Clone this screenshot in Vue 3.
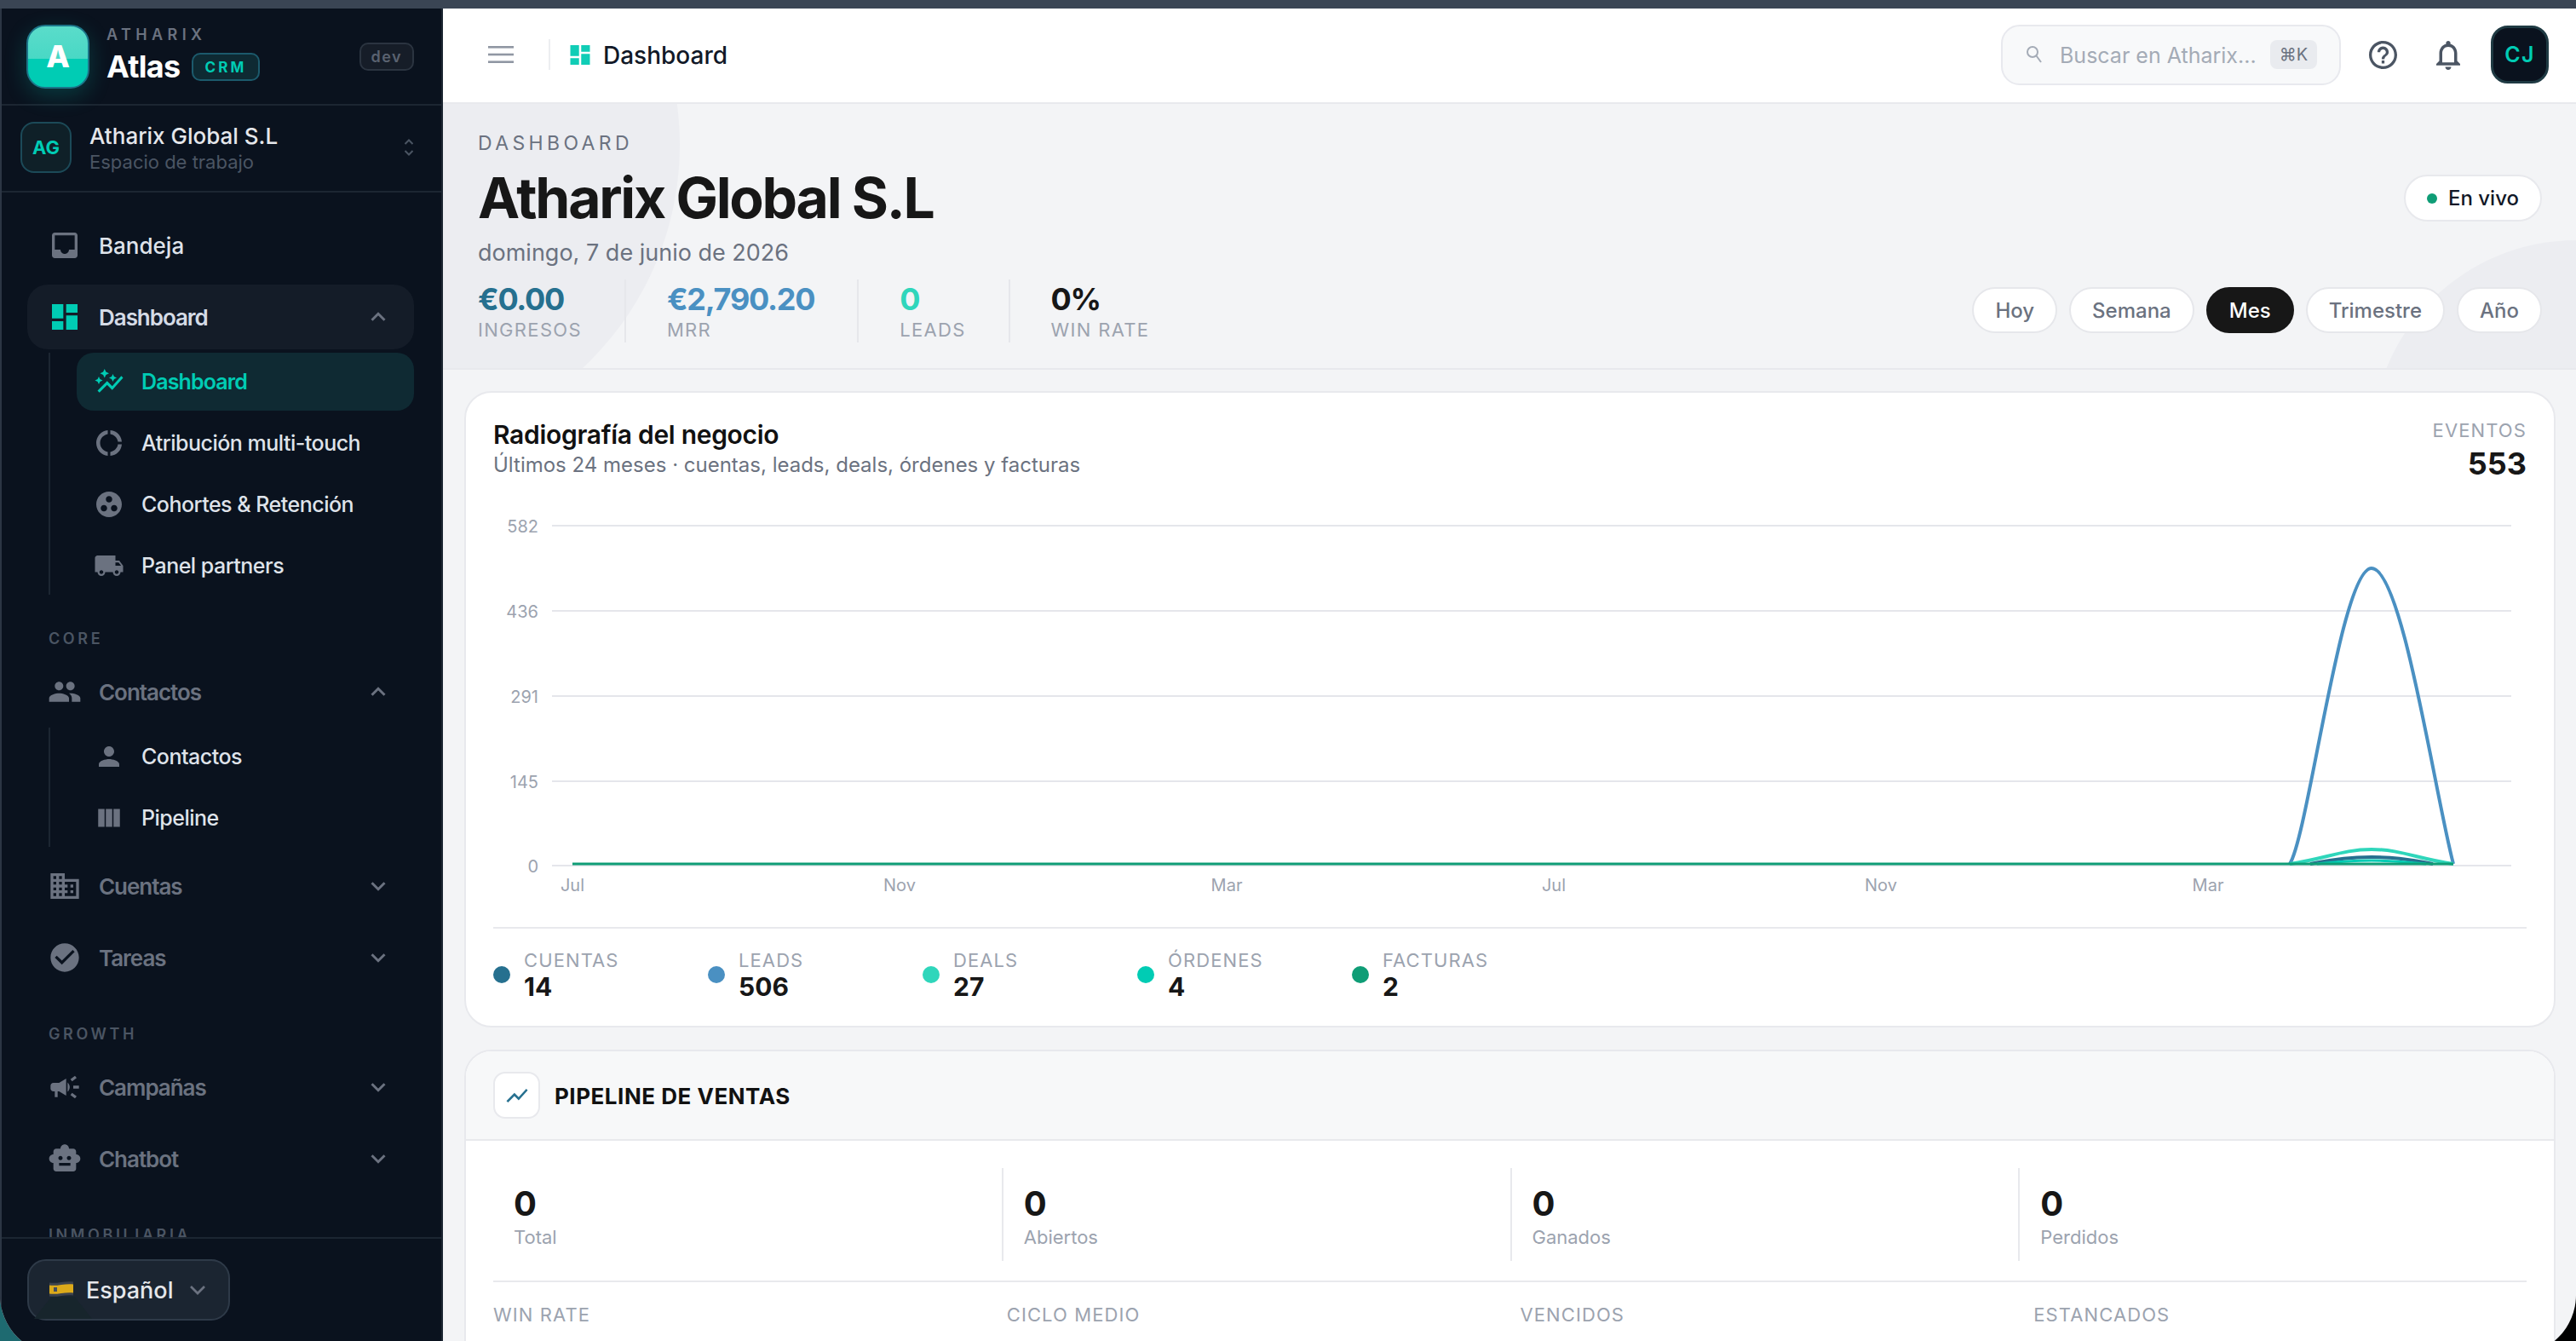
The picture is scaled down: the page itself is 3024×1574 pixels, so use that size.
<template>
  <div class="page">
    <div class="shell">
      <aside class="sidebar">
        <div class="brand">
          <div class="logo"><span>A</span></div>
          <div class="brand-text">
            <div class="brand-top">ATHARIX</div>
            <div class="brand-row">
              <span class="brand-name">Atlas</span>
              <span class="crm">CRM</span>
            </div>
          </div>
          <span class="dev">dev</span>
        </div>

        <div class="workspace">
          <div class="ws-avatar">AG</div>
          <div class="ws-text">
            <div class="ws-name">Atharix Global S.L</div>
            <div class="ws-sub">Espacio de trabajo</div>
          </div>
          <svg class="ws-arrows" viewBox="0 0 12 24" fill="none" stroke="currentColor" stroke-width="2">
            <path d="M1.5 8 6 3.5 10.5 8" />
            <path d="M1.5 16 6 20.5 10.5 16" />
          </svg>
        </div>

        <nav class="nav">
          <template v-for="sec in sections" :key="sec.label">
            <div v-if="sec.label" class="nav-label">{{ sec.label }}</div>
            <div class="nav-list">
              <div v-for="item in sec.items" :key="item.name" class="nav-block">
                <div class="nav-item" :class="{ open: item.active, plain: item.plain }">
                  <svg class="nav-icon" :class="{ teal: item.active }" viewBox="0 0 24 24" fill="currentColor"><path :d="icons[item.icon]" /></svg>
                  <span class="nav-name">{{ item.name }}</span>
                  <svg v-if="item.chevron" class="chev" viewBox="0 0 24 24" fill="none" stroke="currentColor" stroke-width="2">
                    <path :d="item.chevron === 'up' ? 'M7 14.5l5-5 5 5' : 'M7 9.5l5 5 5-5'" />
                  </svg>
                </div>
                <div v-if="item.children" class="sub-list">
                  <div v-for="sub in item.children" :key="sub.name" class="sub-item" :class="{ current: sub.current }">
                    <svg class="sub-icon" viewBox="0 0 24 24" fill="currentColor"><path :d="icons[sub.icon]" /></svg>
                    <span>{{ sub.name }}</span>
                  </div>
                </div>
              </div>
            </div>
          </template>
        </nav>

        <div class="side-foot">
          <button class="lang">
            <span class="lang-shade"></span>
            <svg class="flag" viewBox="0 0 28 18">
              <path d="M0 1.5C9 3 19 -1 28 .5V16.5C19 15 9 19 0 17.5Z" fill="#3c424c" />
              <path d="M0 4.5C9 6 19 2 28 3.5V13.5C19 12 9 16 0 14.5Z" fill="#dcaa1a" />
              <rect x="5" y="7" width="4" height="5" fill="#46505e" />
            </svg>
            <span class="lang-name">Español</span>
            <svg class="lang-chev" viewBox="0 0 24 24" fill="none" stroke="currentColor" stroke-width="2"><path d="M6 9l6 6 6-6" /></svg>
          </button>
        </div>
      </aside>

      <main class="main">
        <header class="topbar">
          <svg class="menu" viewBox="0 0 30 20" fill="#9097a3">
            <rect y="0" width="30" height="2.6" />
            <rect y="8.7" width="30" height="2.6" />
            <rect y="17.4" width="30" height="2.6" />
          </svg>
          <span class="top-sep"></span>
          <svg class="crumb-icon" viewBox="3 3 18 18" fill="#10cdb6"><path :d="icons.dashboard" /></svg>
          <span class="crumb">Dashboard</span>

          <div class="search">
            <svg class="search-icon" viewBox="0 0 20 24" fill="none" stroke="#a4abb6" stroke-width="2">
              <circle cx="8" cy="9" r="6" />
              <path d="M12.5 13.5 18 21" />
            </svg>
            <span class="search-text">Buscar en Atharix...</span>
            <kbd>⌘K</kbd>
          </div>
          <svg class="top-icon help" viewBox="2 2 20 20" fill="#4b5563"><path :d="icons.help" /></svg>
          <svg class="top-icon bell" viewBox="4 2 16 20" fill="#4b5563"><path :d="icons.bell" /></svg>
          <div class="avatar">CJ</div>
        </header>

        <section class="hero">
          <span class="blob blob-left"></span>
          <span class="blob blob-right"></span>
          <div class="hero-left">
            <div class="eyebrow">DASHBOARD</div>
            <h1>Atharix Global S.L</h1>
            <div class="date">domingo, 7 de junio de 2026</div>
            <div class="hero-stats">
              <div v-for="s in heroStats" :key="s.label" class="hero-stat">
                <div class="hero-value" :style="{ color: s.color }">{{ s.value }}</div>
                <div class="hero-label">{{ s.label }}</div>
              </div>
            </div>
          </div>
          <div class="hero-right">
            <div class="live"><i></i>En vivo</div>
            <div class="periods">
              <button v-for="p in periods" :key="p" class="period" :class="{ on: p === 'Mes' }">{{ p }}</button>
            </div>
          </div>
        </section>

        <div class="content">
          <section class="card xray">
            <div class="xray-head">
              <div>
                <h2>Radiografía del negocio</h2>
                <p>Últimos 24 meses · cuentas, leads, deals, órdenes y facturas</p>
              </div>
              <div class="events">
                <div class="events-label">EVENTOS</div>
                <div class="events-value">553</div>
              </div>
            </div>

            <svg class="chart" viewBox="579 600 2390 460" width="2390" height="460">
              <g v-for="t in yTicks" :key="t.label">
                <line x1="648" :y1="t.y" x2="2948" :y2="t.y" stroke="#e5e6eb" stroke-width="2" />
                <text x="632" :y="t.y + 8" text-anchor="end" class="tick">{{ t.label }}</text>
              </g>
              <text v-for="t in xTicks" :key="t.x" :x="t.x" y="1046" text-anchor="middle" class="tick">{{ t.label }}</text>
              <path d="M2688 1014C2710 980 2748 667 2784 667C2820 667 2858 930 2880 1014" fill="none" stroke="#4a90c2" stroke-width="4" />
              <path d="M2688 1014C2730 1008 2750 997 2784 997C2818 997 2838 1008 2880 1014" fill="none" stroke="#2fd6bb" stroke-width="4" />
              <path d="M2712 1014C2745 1008 2760 1006 2784 1006C2808 1006 2823 1008 2856 1014" fill="none" stroke="#26708f" stroke-width="4" />
              <path d="M2720 1014C2750 1011 2765 1010 2784 1010C2803 1010 2818 1011 2848 1014" fill="none" stroke="#00ccb4" stroke-width="3" />
              <path d="M672 1014H2880" fill="none" stroke="#0f9d76" stroke-width="3" />
            </svg>

            <div class="legend">
              <div v-for="l in legend" :key="l.label" class="legend-item">
                <i :style="{ background: l.color }"></i>
                <div>
                  <div class="legend-label">{{ l.label }}</div>
                  <div class="legend-value">{{ l.value }}</div>
                </div>
              </div>
            </div>
          </section>

          <section class="card pipeline">
            <div class="pipe-head">
              <span class="pipe-icon">
                <svg viewBox="0 0 24 24" fill="#26708f"><path :d="icons.showChart" /></svg>
              </span>
              <h3>PIPELINE DE VENTAS</h3>
            </div>
            <div class="pipe-body">
              <div class="pipe-stats">
                <div v-for="s in pipeStats" :key="s" class="pipe-stat">
                  <div class="pipe-value">0</div>
                  <div class="pipe-label">{{ s }}</div>
                </div>
              </div>
              <div class="pipe-metrics">
                <div v-for="m in pipeMetrics" :key="m.label" class="metric">
                  <div class="metric-label">{{ m.label }}</div>
                  <div class="metric-value" :style="{ color: m.color }">{{ m.value }}</div>
                </div>
              </div>
            </div>
          </section>
        </div>
      </main>
    </div>
  </div>
</template>

<script setup>
const icons = {
  inbox: 'M19 3H4.99c-1.11 0-1.98.89-1.98 2L3 19c0 1.1.88 2 1.99 2H19c1.1 0 2-.9 2-2V5c0-1.11-.9-2-2-2zm0 12h-4c0 1.66-1.35 3-3 3s-3-1.34-3-3H4.99V5H19v10z',
  dashboard: 'M3 13h8V3H3v10zm0 8h8v-6H3v6zm10 0h8V11h-8v10zm0-18v6h8V3h-8z',
  autoGraph: 'M14.06 9.94 12 9l2.06-.94L15 6l.94 2.06L18 9l-2.06.94L15 12zM4 14l.94-2.06L7 11l-2.06-.94L4 8l-.94 2.06L1 11l2.06.94L4 14zm4.5-5 1.09-2.41L12 5.5 9.59 4.41 8.5 2 7.41 4.41 5 5.5l2.41 1.09L8.5 9zm-4 11.5 6-6.01 4 4L23 8.93l-1.41-1.41-7.09 7.97-4-4L3 19l1.5 1.5z',
  donut: 'M11 5.08V2c-5 .5-9 4.81-9 10s4 9.5 9 10v-3.08c-3-.48-6-3.19-6-6.92s3-6.44 6-6.92zM18.97 11H22c-.47-5-4-8.53-9-9v3.08C16 5.51 18.54 8 18.97 11zM13 18.92V22c5-.47 8.53-4 9-9h-3.03c-.43 3-2.97 5.49-5.97 5.92z',
  groupWork: 'M12 2C6.48 2 2 6.48 2 12s4.48 10 10 10 10-4.48 10-10S17.52 2 12 2zM8 17.5c-1.38 0-2.5-1.12-2.5-2.5s1.12-2.5 2.5-2.5 2.5 1.12 2.5 2.5-1.12 2.5-2.5 2.5zM9.5 8c0-1.38 1.12-2.5 2.5-2.5s2.5 1.12 2.5 2.5-1.12 2.5-2.5 2.5S9.5 9.38 9.5 8zm6.5 9.5c-1.38 0-2.5-1.12-2.5-2.5s1.12-2.5 2.5-2.5 2.5 1.12 2.5 2.5-1.12 2.5-2.5 2.5z',
  truck: 'M20 8h-3V4H3c-1.1 0-2 .9-2 2v11h2c0 1.66 1.34 3 3 3s3-1.34 3-3h6c0 1.66 1.34 3 3 3s3-1.34 3-3h2v-5l-3-4zM6 18.5c-.83 0-1.5-.67-1.5-1.5s.67-1.5 1.5-1.5 1.5.67 1.5 1.5-.67 1.5-1.5 1.5zm13.5-9l1.96 2.5H17V9.5h2.5zm-1.5 9c-.83 0-1.5-.67-1.5-1.5s.67-1.5 1.5-1.5 1.5.67 1.5 1.5-.67 1.5-1.5 1.5z',
  people: 'M16 11c1.66 0 2.99-1.34 2.99-3S17.66 5 16 5c-1.66 0-3 1.34-3 3s1.34 3 3 3zm-8 0c1.66 0 2.99-1.34 2.99-3S9.66 5 8 5C6.34 5 5 6.34 5 8s1.34 3 3 3zm0 2c-2.33 0-7 1.17-7 3.5V19h14v-2.5c0-2.33-4.67-3.5-7-3.5zm8 0c-.29 0-.62.02-.97.05 1.16.84 1.97 1.97 1.97 3.45V19h6v-2.5c0-2.33-4.67-3.5-7-3.5z',
  person: 'M12 12c2.21 0 4-1.79 4-4s-1.79-4-4-4-4 1.79-4 4 1.79 4 4 4zm0 2c-2.67 0-8 1.34-8 4v2h16v-2c0-2.66-5.33-4-8-4z',
  week: 'M3.5 5h5v14h-5zM9.5 5h5v14h-5zM15.5 5h5v14h-5z',
  domain: 'M12 7V3H2v18h20V7H12zM6 19H4v-2h2v2zm0-4H4v-2h2v2zm0-4H4V9h2v2zm0-4H4V5h2v2zm4 12H8v-2h2v2zm0-4H8v-2h2v2zm0-4H8V9h2v2zm0-4H8V5h2v2zm10 12h-8v-2h2v-2h-2v-2h2v-2h-2V9h8v10zm-2-8h-2v2h2v-2zm0 4h-2v2h2v-2z',
  check: 'M12 2C6.48 2 2 6.48 2 12s4.48 10 10 10 10-4.48 10-10S17.52 2 12 2zm-2 15l-5-5 1.41-1.41L10 14.17l7.59-7.59L19 8l-9 9z',
  campaign: 'M18 11v2h4v-2h-4zm-2 6.61c.96.71 2.21 1.65 3.2 2.39.4-.53.8-1.07 1.2-1.6-.99-.74-2.24-1.68-3.2-2.4-.4.54-.8 1.08-1.2 1.61zM20.4 5.6c-.4-.53-.8-1.07-1.2-1.6-.99.74-2.24 1.68-3.2 2.4.4.53.8 1.07 1.2 1.6.96-.72 2.21-1.65 3.2-2.4zM4 9c-1.1 0-2 .9-2 2v2c0 1.1.9 2 2 2h1v4h2v-4h1l5 3V6L8 9H4zm11.5 3c0-1.33-.58-2.53-1.5-3.35v6.69c.92-.81 1.5-2.01 1.5-3.34z',
  bot: 'M20 9V7c0-1.1-.9-2-2-2h-3c0-1.66-1.34-3-3-3S9 3.34 9 5H6c-1.1 0-2 .9-2 2v2c-1.66 0-3 1.34-3 3s1.34 3 3 3v4c0 1.1.9 2 2 2h12c1.1 0 2-.9 2-2v-4c1.66 0 3-1.34 3-3s-1.34-3-3-3zM7.5 11.5C7.5 10.67 8.17 10 9 10s1.5.67 1.5 1.5S9.83 13 9 13s-1.5-.67-1.5-1.5zM16 17H8v-2h8v2zm-1-4c-.83 0-1.5-.67-1.5-1.5S14.17 10 15 10s1.5.67 1.5 1.5S15.83 13 15 13z',
  help: 'M11 18h2v-2h-2v2zm1-16C6.48 2 2 6.48 2 12s4.48 10 10 10 10-4.48 10-10S17.52 2 12 2zm0 18c-4.41 0-8-3.59-8-8s3.59-8 8-8 8 3.59 8 8-3.59 8-8 8zm0-14c-2.21 0-4 1.79-4 4h2c0-1.1.9-2 2-2s2 .9 2 2c0 2-3 1.75-3 5h2c0-2.25 3-2.5 3-5 0-2.21-1.79-4-4-4z',
  bell: 'M12 22c1.1 0 2-.9 2-2h-4c0 1.1.9 2 2 2zm6-6v-5c0-3.07-1.63-5.64-4.5-6.32V4c0-.83-.67-1.5-1.5-1.5s-1.5.67-1.5 1.5v.68C7.64 5.36 6 7.92 6 11v5l-2 2v1h16v-1l-2-2zm-2 1H8v-6c0-2.48 1.51-4.5 4-4.5s4 2.02 4 4.5v6z',
  showChart: 'M3.5 18.49l6-6.01 4 4L22 6.92l-1.41-1.41-7.09 7.97-4-4L2 16.99z'
}

const sections = [
  {
    label: '',
    items: [
      { name: 'Bandeja', icon: 'inbox', plain: true },
      {
        name: 'Dashboard',
        icon: 'dashboard',
        active: true,
        chevron: 'up',
        children: [
          { name: 'Dashboard', icon: 'autoGraph', current: true },
          { name: 'Atribución multi-touch', icon: 'donut' },
          { name: 'Cohortes & Retención', icon: 'groupWork' },
          { name: 'Panel partners', icon: 'truck' }
        ]
      }
    ]
  },
  {
    label: 'CORE',
    items: [
      {
        name: 'Contactos',
        icon: 'people',
        chevron: 'up',
        children: [
          { name: 'Contactos', icon: 'person' },
          { name: 'Pipeline', icon: 'week' }
        ]
      },
      { name: 'Cuentas', icon: 'domain', chevron: 'down' },
      { name: 'Tareas', icon: 'check', chevron: 'down' }
    ]
  },
  {
    label: 'GROWTH',
    items: [
      { name: 'Campañas', icon: 'campaign', chevron: 'down' },
      { name: 'Chatbot', icon: 'bot', chevron: 'down' }
    ]
  },
  { label: 'INMOBILIARIA', items: [] }
]

const heroStats = [
  { value: '€0.00', label: 'INGRESOS', color: '#26708f' },
  { value: '€2,790.20', label: 'MRR', color: '#4a90c2' },
  { value: '0', label: 'LEADS', color: '#2fd6bb' },
  { value: '0%', label: 'WIN RATE', color: '#171717' }
]

const periods = ['Hoy', 'Semana', 'Mes', 'Trimestre', 'Año']

const yTicks = [
  { label: '582', y: 617 },
  { label: '436', y: 717 },
  { label: '291', y: 817 },
  { label: '145', y: 917 },
  { label: '0', y: 1016 }
]

const xTicks = [
  { label: 'Jul', x: 672 },
  { label: 'Nov', x: 1056 },
  { label: 'Mar', x: 1440 },
  { label: 'Jul', x: 1824 },
  { label: 'Nov', x: 2208 },
  { label: 'Mar', x: 2592 }
]

const legend = [
  { label: 'CUENTAS', value: '14', color: '#26708f' },
  { label: 'LEADS', value: '506', color: '#4a90c2' },
  { label: 'DEALS', value: '27', color: '#2fd6bb' },
  { label: 'ÓRDENES', value: '4', color: '#00ccb4' },
  { label: 'FACTURAS', value: '2', color: '#0f9d76' }
]

const pipeStats = ['Total', 'Abiertos', 'Ganados', 'Perdidos']

const pipeMetrics = [
  { label: 'WIN RATE', value: '0%', color: '#171717' },
  { label: 'CICLO MEDIO', value: '0 días', color: '#171717' },
  { label: 'VENCIDOS', value: '1', color: '#d9924a' },
  { label: 'ESTANCADOS', value: '15', color: '#d9924a' }
]
</script>

<style>
html, body {
  margin: 0;
  height: 100%;
  overflow: hidden;
}
</style>

<style scoped>
* {
  box-sizing: border-box;
}
.page {
  width: 3024px;
  height: 1574px;
  overflow: hidden;
  padding-top: 10px;
  font-family: Inter, "Noto Sans", sans-serif;
  background: linear-gradient(90deg, #1e6a70 50%, #000 50%) bottom / 100% 120px no-repeat, #3a4554;
}
.shell {
  display: flex;
  width: 3024px;
  height: 1580px;
  border-radius: 0 0 70px 70px;
  overflow: hidden;
  background: #f3f4f6;
}

/* sidebar */
.sidebar {
  width: 520px;
  flex: none;
  display: flex;
  flex-direction: column;
  height: 1564px;
  background: #0a121e;
  border-left: 2px solid #2c3644;
  border-right: 2px solid #1c2632;
}
.brand {
  height: 114px;
  flex: none;
  display: flex;
  align-items: center;
  padding: 0 32px 0 29px;
  border-bottom: 2px solid #1c2632;
}
.logo {
  width: 74px;
  height: 75px;
  flex: none;
  display: flex;
  align-items: center;
  justify-content: center;
  border-radius: 22px;
  border: 2px solid #1c7488;
  background: linear-gradient(180deg, #5adcca 0%, #49d8c5 54%, #00ccb4 54%, #00ccb4 100%);
  box-shadow: 0 8px 26px rgba(0, 204, 180, 0.22);
  color: #fff;
  font-size: 36px;
  font-weight: 800;
}
.brand-text {
  margin-left: 20px;
}
.brand-top {
  font-size: 18px;
  line-height: 18px;
  font-weight: 600;
  letter-spacing: 0.3em;
  color: #6b7280;
}
.brand-row {
  display: flex;
  align-items: center;
  gap: 14px;
  margin-top: 6px;
}
.brand-name {
  font-size: 36px;
  line-height: 44px;
  font-weight: 700;
  letter-spacing: -0.02em;
  color: #fff;
}
.crm {
  padding: 0 13px;
  height: 33px;
  line-height: 30px;
  border: 2px solid #1c5a6c;
  border-radius: 10px;
  background: #0e2a33;
  color: #00ccb4;
  font-size: 17px;
  font-weight: 700;
  letter-spacing: 0.19em;
}
.dev {
  margin-left: auto;
  height: 33px;
  padding: 0 12px;
  line-height: 29px;
  border: 2px solid #2b3440;
  border-radius: 10px;
  background: #161d28;
  color: #5a6270;
  font-size: 18px;
  font-weight: 600;
  letter-spacing: 0.08em;
}
.workspace {
  height: 102px;
  flex: none;
  display: flex;
  align-items: center;
  padding: 0 32px 2px 22px;
  border-bottom: 2px solid #1c2632;
}
.ws-avatar {
  width: 60px;
  height: 60px;
  flex: none;
  display: flex;
  align-items: center;
  justify-content: center;
  border: 2px solid #1c4a58;
  border-radius: 16px;
  background: #0f2028;
  color: #00ccb4;
  font-size: 22px;
  font-weight: 700;
}
.ws-text {
  margin-left: 21px;
}
.ws-name {
  font-size: 26px;
  line-height: 32px;
  font-weight: 500;
  color: #e5e7eb;
}
.ws-sub {
  margin-top: 1px;
  font-size: 22px;
  line-height: 26px;
  color: #4b5563;
}
.ws-arrows {
  width: 12px;
  height: 24px;
  margin-left: auto;
  color: #4b5563;
}
.nav {
  flex: 1;
  min-height: 0;
  overflow: hidden;
  padding: 24px 32px 0 30px;
}
.nav-label {
  height: 24px;
  line-height: 24px;
  margin: 40px 0 12px 25px;
  font-size: 18px;
  font-weight: 600;
  letter-spacing: 0.2em;
  color: #4b5563;
}
.nav-list {
  display: flex;
  flex-direction: column;
  gap: 8px;
}
.nav-item {
  height: 76px;
  display: flex;
  align-items: center;
  gap: 20px;
  padding: 0 24px;
  border-radius: 24px;
  font-size: 26px;
  font-weight: 600;
  letter-spacing: -0.04em;
  color: #6b7280;
}
.nav-item.open {
  background: #141c28;
  color: #d5dbe6;
}
.nav-item.plain {
  color: #dfe3ea;
  font-weight: 500;
  letter-spacing: 0;
}
.nav-icon {
  width: 40px;
  height: 40px;
  flex: none;
  color: #6b7280;
}
.nav-icon.teal {
  color: #00ccb4;
}
.chev {
  width: 36px;
  height: 36px;
  margin-left: auto;
  color: #6b7280;
}
.sub-list {
  display: flex;
  flex-direction: column;
  gap: 4px;
  margin: 4px 0 0 25px;
  padding-left: 31px;
  border-left: 2px solid #1c2632;
}
.sub-item {
  height: 68px;
  display: flex;
  align-items: center;
  gap: 20px;
  padding-left: 20px;
  border-radius: 20px;
  font-size: 25px;
  font-weight: 500;
  letter-spacing: -0.02em;
  color: #dfe3ea;
}
.sub-item.current {
  background: #0f2a33;
  color: #00ccb4;
  font-weight: 600;
  letter-spacing: -0.035em;
}
.sub-icon {
  width: 36px;
  height: 36px;
  flex: none;
  color: #6b7280;
}
.sub-item.current .sub-icon {
  color: #00ccb4;
}
.side-foot {
  flex: none;
  height: 122px;
  padding: 24px 30px 0;
  border-top: 2px solid #1c2632;
}
.lang {
  position: relative;
  width: 238px;
  height: 72px;
  display: flex;
  align-items: center;
  padding: 0 0 0 24px;
  border: 2px solid #2e3a48;
  border-radius: 22px;
  background: #1b2531;
  color: #e5e7eb;
  font-family: inherit;
  font-size: 27px;
  font-weight: 500;
}
.lang-shade {
  position: absolute;
  left: 6px;
  bottom: 0;
  width: 68px;
  height: 26px;
  background: #17252c;
  clip-path: polygon(30% 0, 70% 0, 100% 100%, 0 100%);
}
.flag {
  position: relative;
  width: 28px;
  height: 18px;
  margin: -2px 15px 0 0;
}
.lang-name {
  position: relative;
}
.lang-chev {
  width: 32px;
  height: 32px;
  margin-left: 13px;
  color: #6b7280;
}

/* main */
.main {
  flex: 1;
  min-width: 0;
  display: flex;
  flex-direction: column;
}
.topbar {
  height: 112px;
  flex: none;
  display: flex;
  align-items: center;
  padding: 0 32px 2px 53px;
  background: #fff;
  border-bottom: 2px solid #e8e9ed;
}
.menu {
  width: 30px;
  height: 20px;
}
.top-sep {
  width: 2px;
  height: 36px;
  margin: 0 23px 0 41px;
  background: #eceef1;
}
.crumb-icon {
  width: 24px;
  height: 23px;
}
.crumb {
  margin: 2px 0 0 15px;
  font-size: 28px;
  font-weight: 500;
  color: #111827;
}
.search {
  width: 399px;
  height: 71px;
  margin-left: auto;
  display: flex;
  align-items: center;
  padding: 0 26px 0 27px;
  border: 2px solid #e8e9ee;
  border-radius: 22px;
  background: #f8f9fa;
}
.search-icon {
  width: 20px;
  height: 24px;
  flex: none;
}
.search-text {
  margin: 2px 0 0 20px;
  font-size: 25px;
  color: #a4abb6;
  white-space: nowrap;
}
kbd {
  width: 55px;
  height: 34px;
  margin-left: auto;
  border-radius: 8px;
  background: #e9ebef;
  color: #6b7280;
  font-family: inherit;
  font-size: 20px;
  line-height: 34px;
  text-align: center;
}
.top-icon {
  flex: none;
}
.help {
  width: 33px;
  height: 33px;
  margin-left: 33px;
}
.bell {
  width: 28px;
  height: 35px;
  margin-left: 46px;
}
.avatar {
  width: 68px;
  height: 68px;
  margin-left: 36px;
  display: flex;
  align-items: center;
  justify-content: center;
  border: 3px solid #1f3a43;
  border-radius: 20px;
  background: #0a121e;
  color: #00ccb4;
  font-size: 25px;
  font-weight: 600;
  letter-spacing: 0.05em;
}

.hero {
  position: relative;
  height: 312px;
  flex: none;
  display: flex;
  justify-content: space-between;
  padding: 0 40px 0 41px;
  overflow: hidden;
  background: #f3f4f6;
  border-bottom: 2px solid #e8e9ed;
}
.blob {
  position: absolute;
  border-radius: 50%;
  background: #ecedf1;
}
.blob-left {
  left: -438px;
  top: -310px;
  width: 716px;
  height: 716px;
}
.blob-right {
  left: 2264px;
  top: 160px;
  width: 480px;
  height: 480px;
}
.hero-left,
.hero-right {
  position: relative;
}
.eyebrow {
  margin-top: 32px;
  font-size: 23px;
  line-height: 28px;
  letter-spacing: 0.19em;
  color: #6b7280;
}
h1 {
  margin: 14px 0 0;
  font-size: 66px;
  line-height: 72px;
  font-weight: 700;
  letter-spacing: -0.034em;
  color: #171717;
}
.date {
  margin-top: 12px;
  font-size: 27px;
  line-height: 34px;
  color: #6b7280;
}
.hero-stats {
  display: flex;
  margin-top: 14px;
}
.hero-stat {
  height: 74px;
  padding-right: 50px;
  margin-right: 48px;
  border-right: 2px solid #e6e7eb;
}
.hero-stat:last-child {
  border-right: none;
}
.hero-value {
  font-size: 36px;
  line-height: 46px;
  font-weight: 700;
  letter-spacing: -0.035em;
}
.hero-label {
  margin-top: 1px;
  font-size: 22px;
  line-height: 24px;
  letter-spacing: 0.06em;
  color: #9ca3af;
}
.hero-right {
  display: flex;
  flex-direction: column;
  align-items: flex-end;
}
.live {
  height: 55px;
  margin-top: 83px;
  display: flex;
  align-items: center;
  padding: 0 25px;
  border: 2px solid #e8e9ed;
  border-radius: 28px;
  background: #fff;
  font-size: 24px;
  font-weight: 500;
  color: #111827;
}
.live i {
  width: 12px;
  height: 12px;
  margin-right: 13px;
  border-radius: 50%;
  background: #0f9d76;
}
.periods {
  display: flex;
  gap: 14px;
  margin-top: 77px;
}
.period {
  height: 54px;
  padding: 0 25px;
  border: 2px solid #e6e7eb;
  border-radius: 28px;
  background: #fff;
  font-family: inherit;
  font-size: 24px;
  font-weight: 500;
  color: #6b7280;
}
.period.on {
  background: #171717;
  border-color: #171717;
  color: #fff;
}

.content {
  flex: 1;
  min-height: 0;
  padding: 25px 24px 0 25px;
}
.card {
  background: #fff;
  border: 2px solid #e8e9ed;
  border-radius: 32px;
  overflow: hidden;
}
.xray {
  height: 747px;
  padding: 32px 32px 0;
}
.xray-head {
  display: flex;
  justify-content: space-between;
  height: 107px;
}
h2 {
  margin: -1px 0 0;
  font-size: 30px;
  line-height: 36px;
  font-weight: 600;
  letter-spacing: -0.01em;
  color: #111;
}
.xray-head p {
  margin: 1px 0 0;
  font-size: 24px;
  line-height: 34px;
  color: #6b7280;
}
.events {
  margin-top: -2px;
  text-align: right;
}
.events-label {
  font-size: 22px;
  line-height: 28px;
  letter-spacing: 0.05em;
  color: #9ca3af;
}
.events-value {
  margin-top: 3px;
  font-size: 36px;
  line-height: 44px;
  font-weight: 700;
  color: #171717;
}
.chart {
  display: block;
}
.tick {
  font-size: 20px;
  fill: #9ca3af;
}
.legend {
  display: flex;
  height: 112px;
  margin-top: 28px;
  padding-top: 22px;
  border-top: 2px solid #e8e9ed;
}
.legend-item {
  width: 252px;
  display: flex;
  align-items: center;
  align-self: flex-start;
  gap: 16px;
}
.legend-item i {
  width: 20px;
  height: 20px;
  margin-top: 2px;
  border-radius: 50%;
}
.legend-label {
  font-size: 22px;
  line-height: 30px;
  letter-spacing: 0.05em;
  color: #9ca3af;
}
.legend-value {
  font-size: 30px;
  line-height: 32px;
  font-weight: 700;
  color: #171717;
}

.pipeline {
  margin-top: 26px;
  height: 420px;
}
.pipe-head {
  height: 105px;
  display: flex;
  align-items: center;
  gap: 17px;
  padding-left: 32px;
  background: #f7f8f9;
  border-bottom: 2px solid #e8e9ed;
}
.pipe-icon {
  width: 55px;
  height: 55px;
  display: flex;
  align-items: center;
  justify-content: center;
  border: 2px solid #e8e9ed;
  border-radius: 14px;
  background: #fff;
}
.pipe-icon svg {
  width: 30px;
  height: 30px;
}
h3 {
  margin: 2px 0 0;
  font-size: 26px;
  font-weight: 700;
  letter-spacing: 0.02em;
  color: #111;
}
.pipe-body {
  padding: 32px 32px 0;
}
.pipe-stats {
  display: grid;
  grid-template-columns: repeat(4, 1fr);
  height: 134px;
  border-bottom: 2px solid #e8e9ed;
}
.pipe-stat {
  height: 109px;
  padding: 20px 0 0 24px;
  border-left: 2px solid #e8e9ed;
}
.pipe-stat:first-child {
  border-left: none;
}
.pipe-value {
  font-size: 40px;
  line-height: 44px;
  font-weight: 700;
  color: #171717;
}
.pipe-label {
  margin-top: 3px;
  font-size: 22px;
  line-height: 28px;
  color: #9ca3af;
}
.pipe-metrics {
  display: grid;
  grid-template-columns: repeat(4, 1fr);
  column-gap: 24px;
  padding-top: 24px;
}
.metric-label {
  font-size: 22px;
  line-height: 28px;
  letter-spacing: 0.05em;
  color: #9ca3af;
}
.metric-value {
  margin-top: 12px;
  font-size: 30px;
  line-height: 36px;
  font-weight: 700;
}
</style>
